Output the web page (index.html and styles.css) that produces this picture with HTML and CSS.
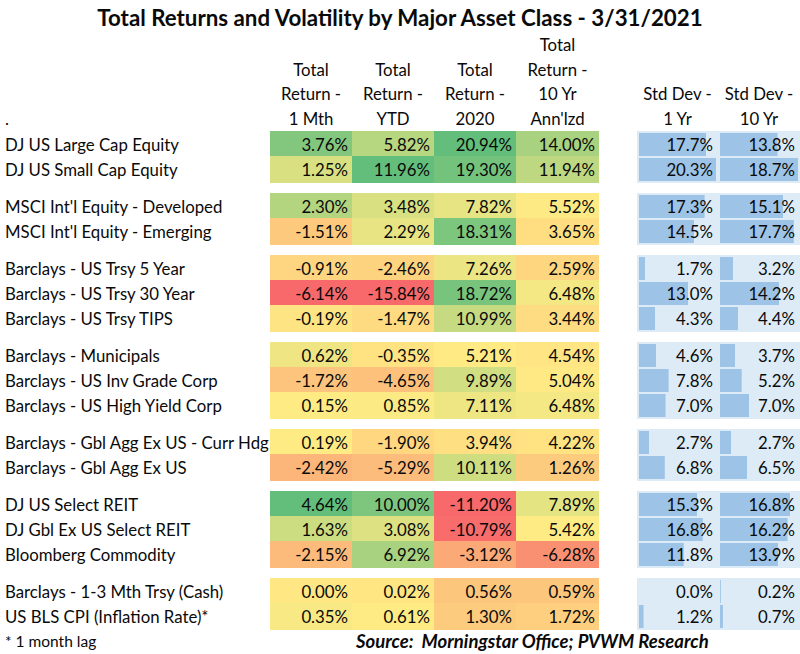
FILE: index.html
```html
<!DOCTYPE html>
<html lang="en">
<head>
<meta charset="utf-8">
<title>Total Returns and Volatility by Major Asset Class</title>
<link rel="stylesheet" href="styles.css">
</head>
<body>
<main class="sheet">
  <h1 class="title">Total Returns and Volatility by Major Asset Class - 3/31/2021</h1>
  <div class="head">
    <div class="hc lbl">.</div>
    <div class="hc">Total<br>Return -<br>1 Mth</div>
    <div class="hc">Total<br>Return -<br>YTD</div>
    <div class="hc">Total<br>Return -<br>2020</div>
    <div class="hc">Total<br>Return -<br>10 Yr<br>Ann'lzd</div>
    <div class="sp"></div>
    <div class="hc">Std Dev -<br>1 Yr</div>
    <div class="hc">Std Dev -<br>10 Yr</div>
  </div>

  <section class="grp">
    <div class="row"><div class="lbl">DJ US Large Cap Equity</div><div class="hm c1">3.76%</div><div class="hm c2">5.82%</div><div class="hm c3">20.94%</div><div class="hm c4">14.00%</div><div class="sp"></div><div class="sd s1">17.7%</div><div class="sd s2">13.8%</div></div>
    <div class="row"><div class="lbl">DJ US Small Cap Equity</div><div class="hm c1">1.25%</div><div class="hm c2">11.96%</div><div class="hm c3">19.30%</div><div class="hm c4">11.94%</div><div class="sp"></div><div class="sd s1">20.3%</div><div class="sd s2">18.7%</div></div>
  </section>

  <section class="grp">
    <div class="row"><div class="lbl">MSCI Int'l Equity - Developed</div><div class="hm c1">2.30%</div><div class="hm c2">3.48%</div><div class="hm c3">7.82%</div><div class="hm c4">5.52%</div><div class="sp"></div><div class="sd s1">17.3%</div><div class="sd s2">15.1%</div></div>
    <div class="row"><div class="lbl">MSCI Int'l Equity - Emerging</div><div class="hm c1">-1.51%</div><div class="hm c2">2.29%</div><div class="hm c3">18.31%</div><div class="hm c4">3.65%</div><div class="sp"></div><div class="sd s1">14.5%</div><div class="sd s2">17.7%</div></div>
  </section>

  <section class="grp">
    <div class="row"><div class="lbl">Barclays - US Trsy 5 Year</div><div class="hm c1">-0.91%</div><div class="hm c2">-2.46%</div><div class="hm c3">7.26%</div><div class="hm c4">2.59%</div><div class="sp"></div><div class="sd s1">1.7%</div><div class="sd s2">3.2%</div></div>
    <div class="row"><div class="lbl">Barclays - US Trsy 30 Year</div><div class="hm c1">-6.14%</div><div class="hm c2">-15.84%</div><div class="hm c3">18.72%</div><div class="hm c4">6.48%</div><div class="sp"></div><div class="sd s1">13.0%</div><div class="sd s2">14.2%</div></div>
    <div class="row"><div class="lbl">Barclays - US Trsy TIPS</div><div class="hm c1">-0.19%</div><div class="hm c2">-1.47%</div><div class="hm c3">10.99%</div><div class="hm c4">3.44%</div><div class="sp"></div><div class="sd s1">4.3%</div><div class="sd s2">4.4%</div></div>
  </section>

  <section class="grp">
    <div class="row"><div class="lbl">Barclays - Municipals</div><div class="hm c1">0.62%</div><div class="hm c2">-0.35%</div><div class="hm c3">5.21%</div><div class="hm c4">4.54%</div><div class="sp"></div><div class="sd s1">4.6%</div><div class="sd s2">3.7%</div></div>
    <div class="row"><div class="lbl">Barclays - US Inv Grade Corp</div><div class="hm c1">-1.72%</div><div class="hm c2">-4.65%</div><div class="hm c3">9.89%</div><div class="hm c4">5.04%</div><div class="sp"></div><div class="sd s1">7.8%</div><div class="sd s2">5.2%</div></div>
    <div class="row"><div class="lbl">Barclays - US High Yield Corp</div><div class="hm c1">0.15%</div><div class="hm c2">0.85%</div><div class="hm c3">7.11%</div><div class="hm c4">6.48%</div><div class="sp"></div><div class="sd s1">7.0%</div><div class="sd s2">7.0%</div></div>
  </section>

  <section class="grp">
    <div class="row"><div class="lbl">Barclays - Gbl Agg Ex US - Curr Hdg</div><div class="hm c1">0.19%</div><div class="hm c2">-1.90%</div><div class="hm c3">3.94%</div><div class="hm c4">4.22%</div><div class="sp"></div><div class="sd s1">2.7%</div><div class="sd s2">2.7%</div></div>
    <div class="row"><div class="lbl">Barclays - Gbl Agg Ex US</div><div class="hm c1">-2.42%</div><div class="hm c2">-5.29%</div><div class="hm c3">10.11%</div><div class="hm c4">1.26%</div><div class="sp"></div><div class="sd s1">6.8%</div><div class="sd s2">6.5%</div></div>
  </section>

  <section class="grp">
    <div class="row"><div class="lbl">DJ US Select REIT</div><div class="hm c1">4.64%</div><div class="hm c2">10.00%</div><div class="hm c3">-11.20%</div><div class="hm c4">7.89%</div><div class="sp"></div><div class="sd s1">15.3%</div><div class="sd s2">16.8%</div></div>
    <div class="row"><div class="lbl">DJ Gbl Ex US Select REIT</div><div class="hm c1">1.63%</div><div class="hm c2">3.08%</div><div class="hm c3">-10.79%</div><div class="hm c4">5.42%</div><div class="sp"></div><div class="sd s1">16.8%</div><div class="sd s2">16.2%</div></div>
    <div class="row"><div class="lbl">Bloomberg Commodity</div><div class="hm c1">-2.15%</div><div class="hm c2">6.92%</div><div class="hm c3">-3.12%</div><div class="hm c4">-6.28%</div><div class="sp"></div><div class="sd s1">11.8%</div><div class="sd s2">13.9%</div></div>
  </section>

  <section class="grp">
    <div class="row"><div class="lbl">Barclays - 1-3 Mth Trsy (Cash)</div><div class="hm c1">0.00%</div><div class="hm c2">0.02%</div><div class="hm c3">0.56%</div><div class="hm c4">0.59%</div><div class="sp"></div><div class="sd s1">0.0%</div><div class="sd s2">0.2%</div></div>
    <div class="row"><div class="lbl">US BLS CPI (Inflation Rate)*</div><div class="hm c1">0.35%</div><div class="hm c2">0.61%</div><div class="hm c3">1.30%</div><div class="hm c4">1.72%</div><div class="sp"></div><div class="sd s1">1.2%</div><div class="sd s2">0.7%</div></div>
  </section>

  <footer class="foot">
    <div class="note">* 1 month lag</div>
    <div class="src">Source:&nbsp; Morningstar Office; PVWM Research</div>
  </footer>
</main>
<script src="script.js"></script>
</body>
</html>
```

FILE: styles.css
```css
:root {
  --cols: 270px 82px 82px 82px 83px 38px 81px 82px;
}
html, body {
  margin: 0;
  padding: 0;
  background: #ffffff;
}
body {
  font-family: Lato, "Open Sans", "Liberation Sans", sans-serif;
  font-size: 16.8px;
  color: #0a0a0a;
}
.sheet {
  width: 800px;
  height: 654px;
  overflow: hidden;
}
.title {
  margin: 0;
  height: 33px;
  line-height: 36px;
  font-size: 22.3px;
  font-weight: 700;
  text-align: center;
  white-space: nowrap;
}
.head {
  display: grid;
  grid-template-columns: var(--cols);
  height: 98px;
}
.hc {
  display: flex;
  flex-direction: column;
  justify-content: flex-end;
  text-align: center;
  line-height: 24.5px;
  padding-bottom: 1px;
}
.hc.lbl {
  text-align: left;
  padding-left: 5px;
}
.grp {
  margin-top: 12px;
}
.head + .grp {
  margin-top: 0;
}
.row {
  display: grid;
  grid-template-columns: var(--cols);
  height: 25px;
  line-height: 27px;
}
.lbl {
  padding-left: 5px;
  white-space: nowrap;
  overflow: hidden;
}
.hm {
  text-align: right;
  padding-right: 4px;
  background: #ffeb84;
}
.sd {
  text-align: right;
  padding-right: 5px;
  background:
    linear-gradient(#9dc3e6, #9dc3e6) 2px 2px / calc((100% - 4px) * var(--w, 0)) calc(100% - 4px) no-repeat,
    #ddebf7;
}
.foot {
  display: grid;
  grid-template-columns: 352px 1fr;
  height: 26px;
  line-height: 27px;
}
.note {
  padding-left: 5px;
  font-size: 15.5px;
}
.src {
  padding-left: 4px;
  font-size: 18.5px;
  font-weight: 700;
  font-style: italic;
  white-space: nowrap;
}
```

FILE: script.js
```js
(function () {
  var RED = [248, 105, 107];
  var YEL = [255, 235, 132];
  var GRN = [99, 190, 123];

  function mix(a, b, t) {
    if (!isFinite(t)) t = 0;
    t = Math.max(0, Math.min(1, t));
    return a.map(function (v, i) { return Math.round(v + (b[i] - v) * t); });
  }

  /* colour-scale ranges: 1 Mth, YTD, and 2020 + 10 Yr together */
  var scales = ['.hm.c1', '.hm.c2', '.hm.c3, .hm.c4'];

  scales.forEach(function (sel) {
    var cells = Array.prototype.slice.call(document.querySelectorAll(sel));
    var vals = cells.map(function (e) { return parseFloat(e.textContent); });
    var s = vals.slice().sort(function (a, b) { return a - b; });
    var n = s.length;
    var p = (n - 1) * 0.5;
    var lo = Math.floor(p), hi = Math.ceil(p);
    var mid = s[lo] + (s[hi] - s[lo]) * (p - lo);
    var min = s[0], max = s[n - 1];
    cells.forEach(function (e, i) {
      var v = vals[i];
      var col = v < mid ? mix(RED, YEL, (v - min) / (mid - min)) : mix(YEL, GRN, (v - mid) / (max - mid));
      e.style.backgroundColor = 'rgb(' + col.join(',') + ')';
    });
  });

  ['s1', 's2'].forEach(function (k) {
    var cells = Array.prototype.slice.call(document.querySelectorAll('.sd.' + k));
    var vals = cells.map(function (e) { return parseFloat(e.textContent); });
    var max = Math.max.apply(null, vals);
    cells.forEach(function (e, i) {
      e.style.setProperty('--w', (vals[i] / max).toFixed(4));
    });
  });
})();
```
